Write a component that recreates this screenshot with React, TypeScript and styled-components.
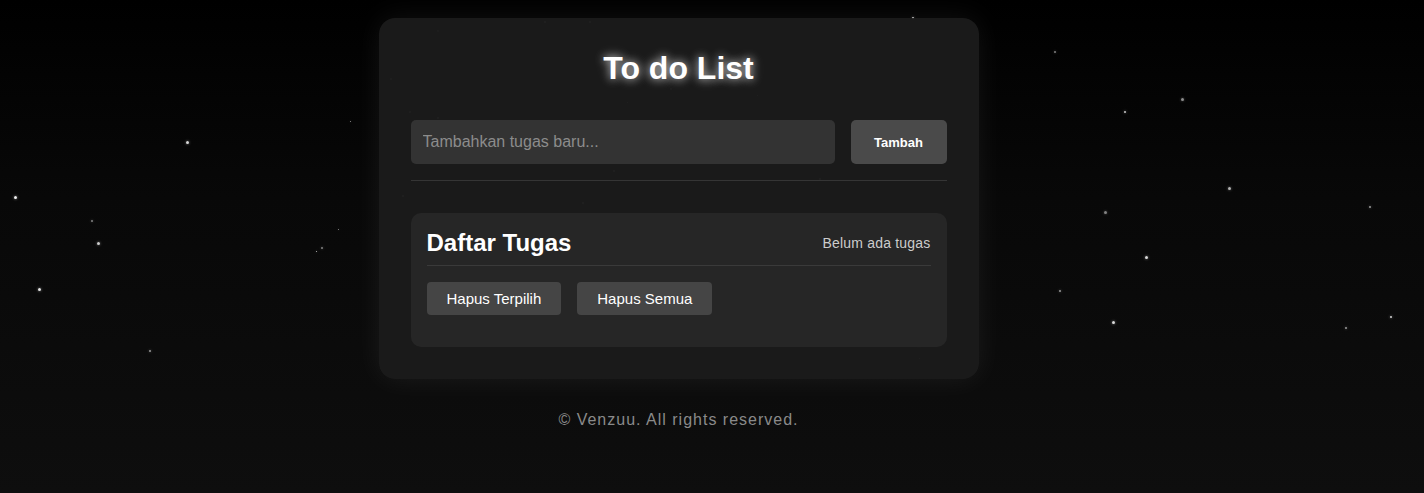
import React from "react";
import styled, { createGlobalStyle } from "styled-components";

const GlobalStyle = createGlobalStyle`
  html, body {
    margin: 0;
    padding: 0;
    background: #050505;
  }
  body {
    font-family: "Liberation Sans", Arial, sans-serif;
    color: #fff;
  }
  * { box-sizing: border-box; }
`;

const Page = styled.div`
  position: relative;
  min-height: 493px;
  background: linear-gradient(180deg, #000 0%, #080808 40%, #0e0e0e 100%);
  overflow: hidden;
`;

const StarField = styled.div`
  position: absolute;
  inset: 0;
  pointer-events: none;
`;

const Star = styled.span<{ $size: number; $alpha: number }>`
  position: absolute;
  width: ${(p) => p.$size}px;
  height: ${(p) => p.$size}px;
  border-radius: 50%;
  background: rgba(255, 255, 255, ${(p) => p.$alpha});
  box-shadow: 0 0 3px rgba(255, 255, 255, ${(p) => p.$alpha * 0.6});
`;

const Content = styled.div`
  position: relative;
  display: flex;
  flex-direction: column;
  align-items: center;
  padding: 18px 67px 0 0;
`;

const Card = styled.main`
  width: 600px;
  padding: 32px;
  border-radius: 16px;
  background: rgba(28, 28, 28, 0.92);
  box-shadow: 0 0 28px rgba(255, 255, 255, 0.07);
`;

const Title = styled.h1`
  margin: 0 0 33px;
  text-align: center;
  font-size: 32px;
  font-weight: 700;
  line-height: 37px;
  color: #fff;
  text-shadow: 0 0 8px rgba(255, 255, 255, 0.7), 0 0 14px rgba(255, 255, 255, 0.3);
`;

const InputRow = styled.div`
  display: flex;
  gap: 16px;
  padding-bottom: 16px;
  border-bottom: 1px solid #353535;
`;

const TaskInput = styled.input`
  flex: 1;
  height: 44px;
  padding: 0 12px;
  border: none;
  border-radius: 5px;
  background: #333333;
  color: #fff;
  font-family: "Liberation Sans", Arial, sans-serif;
  font-size: 16px;
  outline: none;
  &::placeholder {
    color: #8c8c8c;
  }
`;

const AddButton = styled.button`
  width: 96px;
  height: 44px;
  border: none;
  border-radius: 5px;
  background: #4a4a4a;
  color: #fff;
  font-family: "Liberation Sans", Arial, sans-serif;
  font-size: 13px;
  font-weight: 700;
  cursor: pointer;
`;

const Panel = styled.section`
  margin-top: 32px;
  padding: 16px;
  border-radius: 10px;
  background: #262626;
`;

const PanelHeader = styled.div`
  display: flex;
  justify-content: space-between;
  align-items: center;
  padding-bottom: 8px;
  border-bottom: 1px solid #3a3a3a;
`;

const PanelTitle = styled.h2`
  margin: 0;
  font-size: 24px;
  font-weight: 700;
  line-height: 28px;
  color: #fff;
`;

const Status = styled.span`
  font-size: 14px;
  letter-spacing: 0.2px;
  color: #cccccc;
`;

const ActionRow = styled.div`
  display: flex;
  gap: 16px;
  margin: 16px 0 16px;
`;

const ActionButton = styled.button`
  height: 33px;
  padding: 0 20px;
  border: none;
  border-radius: 4px;
  background: #454545;
  color: #fff;
  font-family: "Liberation Sans", Arial, sans-serif;
  font-size: 15px;
  cursor: pointer;
`;

const Footer = styled.footer`
  margin-top: 32px;
  font-size: 16px;
  letter-spacing: 1px;
  color: #8a8a8a;
`;

const stars: [number, number, number, number][] = [
  [15, 197, 3, 0.95], [92, 221, 2, 0.5], [98, 243, 3, 0.8], [39, 289, 3, 0.9],
  [150, 351, 2, 0.6], [187, 142, 3, 0.85], [350, 121, 1, 0.6], [338, 229, 1, 0.6],
  [322, 248, 2, 0.5], [316, 251, 1, 0.8],
  [913, 18, 2, 0.8], [1055, 52, 2, 0.5], [1125, 112, 2, 0.8], [1182, 99, 3, 0.55],
  [1229, 188, 3, 0.7], [1105, 212, 3, 0.5], [1370, 207, 2, 0.6], [1146, 257, 3, 0.85],
  [1060, 291, 2, 0.6], [1113, 322, 3, 0.85], [1391, 317, 2, 0.85], [1346, 328, 2, 0.6],
  [545, 22, 2, 0.35], [590, 22, 2, 0.35], [438, 31, 2, 0.25], [391, 79, 2, 0.25],
  [410, 112, 2, 0.3], [438, 118, 2, 0.3], [671, 89, 2, 0.3], [627, 102, 1, 0.3],
  [757, 95, 1, 0.3], [614, 171, 2, 0.3], [820, 179, 2, 0.3], [403, 196, 2, 0.3],
  [583, 203, 2, 0.3], [629, 231, 1, 0.3], [619, 258, 1, 0.3], [752, 326, 2, 0.3],
  [919, 346, 2, 0.3], [919, 358, 1, 0.3],
];

export default function App() {
  return (
    <>
      <GlobalStyle />
      <Page>
        <StarField>
          {stars.map(([x, y, s, a], i) => (
            <Star
              key={i}
              $size={s}
              $alpha={a}
              style={{ left: x - s / 2, top: y - s / 2 }}
            />
          ))}
        </StarField>
        <Content>
          <Card>
            <Title>To do List</Title>
            <InputRow>
              <TaskInput placeholder="Tambahkan tugas baru..." />
              <AddButton>Tambah</AddButton>
            </InputRow>
            <Panel>
              <PanelHeader>
                <PanelTitle>Daftar Tugas</PanelTitle>
                <Status>Belum ada tugas</Status>
              </PanelHeader>
              <ActionRow>
                <ActionButton>Hapus Terpilih</ActionButton>
                <ActionButton>Hapus Semua</ActionButton>
              </ActionRow>
            </Panel>
          </Card>
          <Footer>© Venzuu. All rights reserved.</Footer>
        </Content>
      </Page>
    </>
  );
}
